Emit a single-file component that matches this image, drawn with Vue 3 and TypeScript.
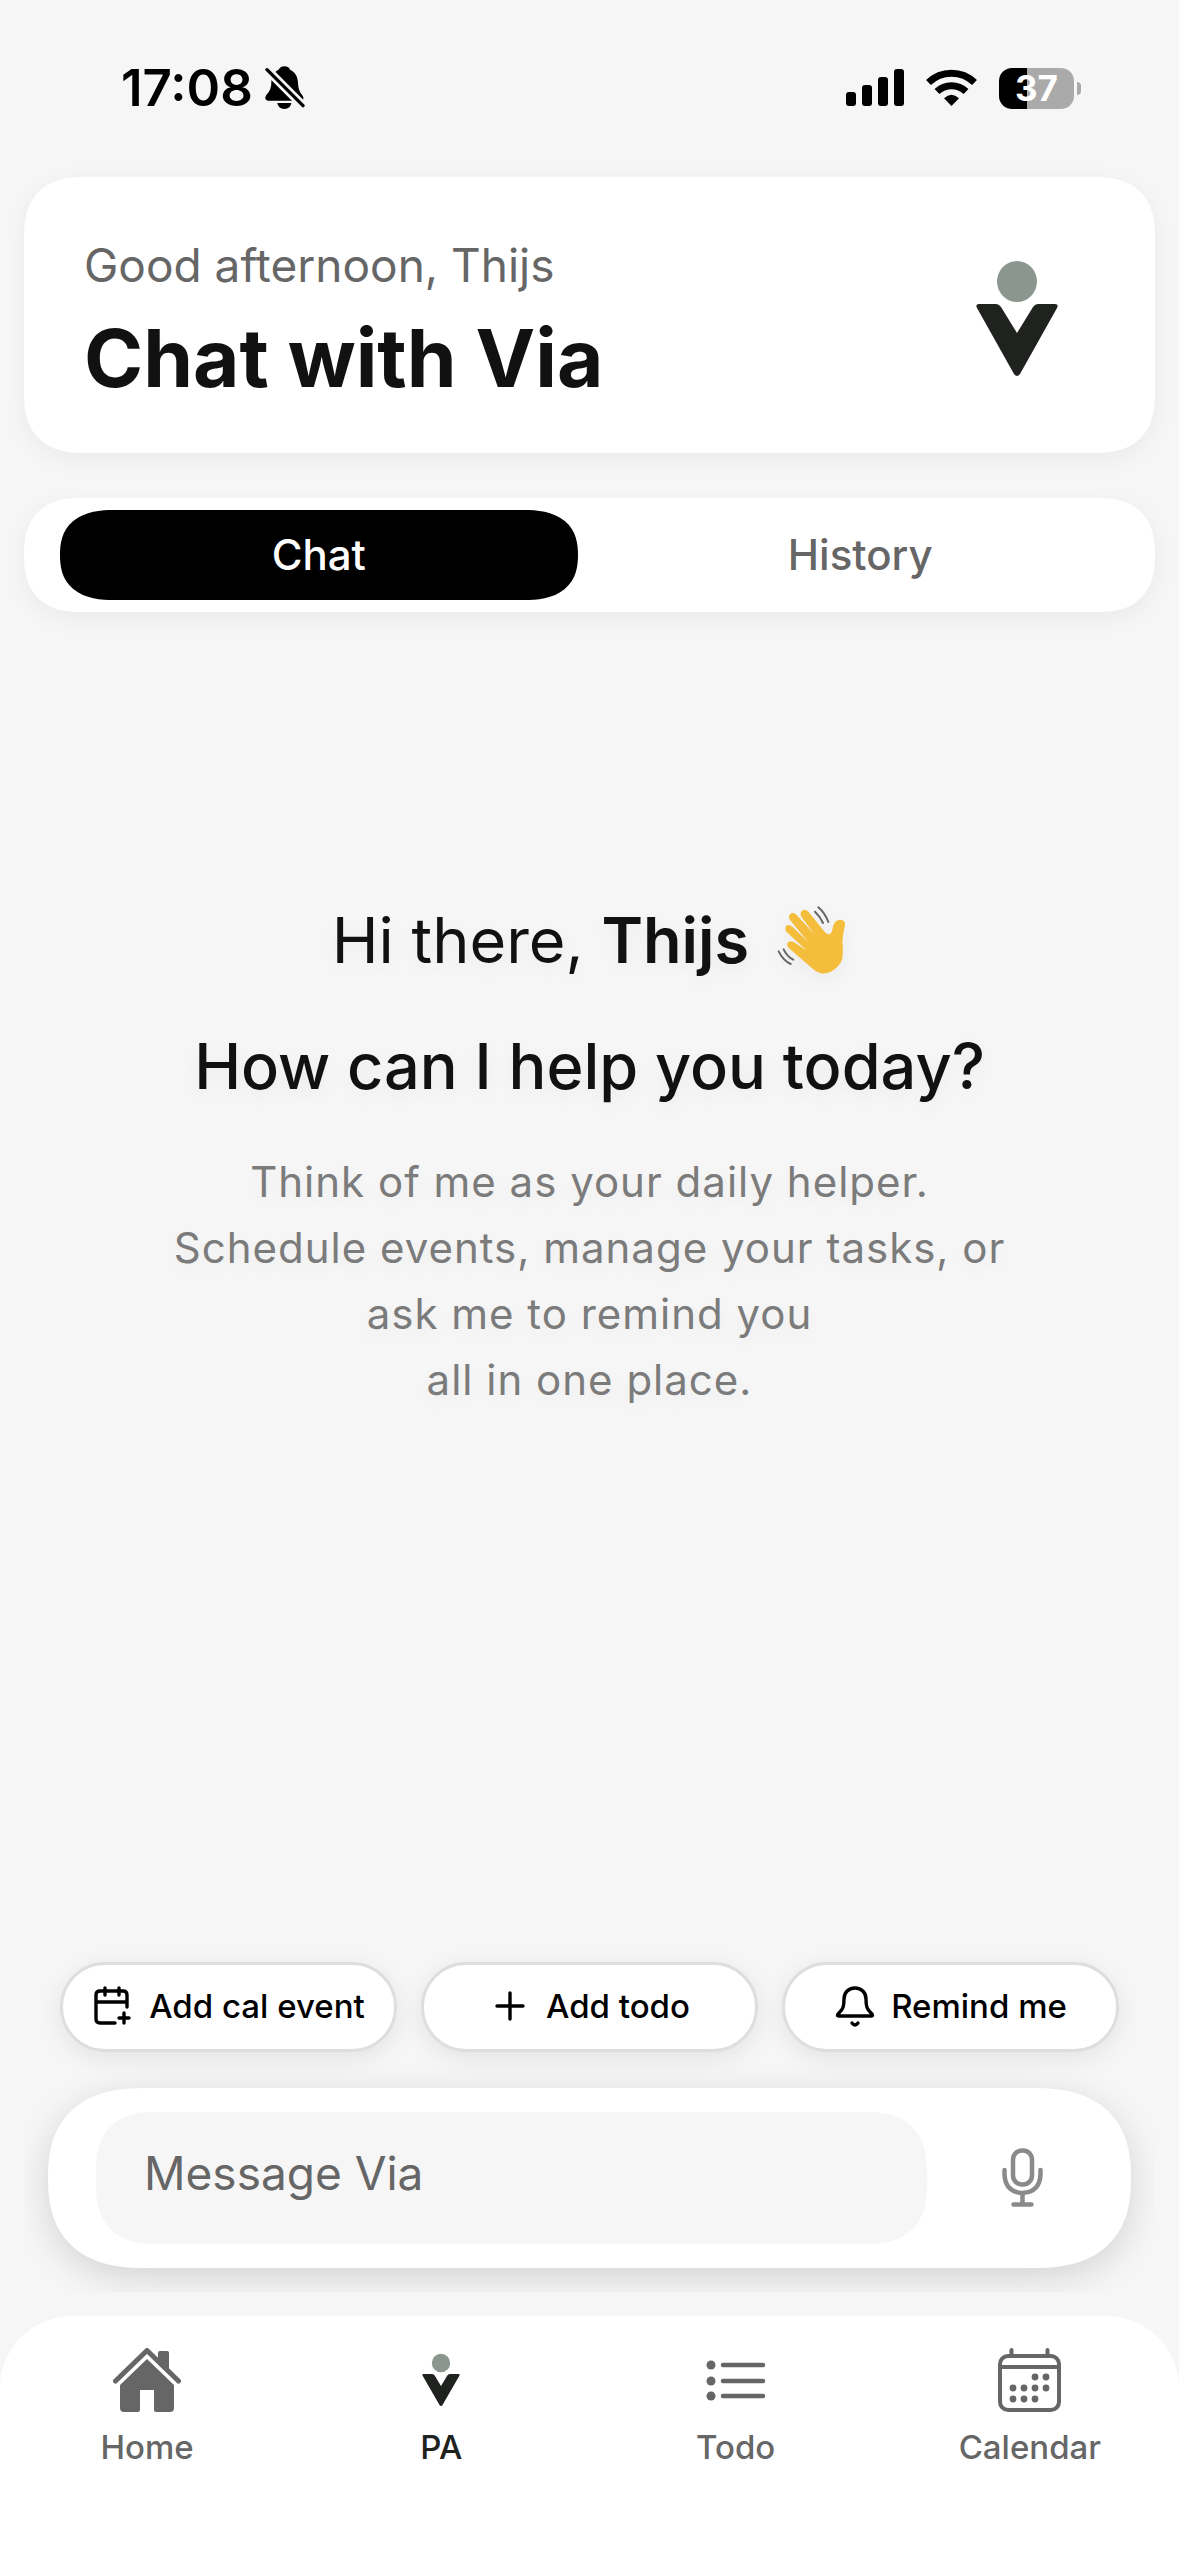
<script setup lang="ts">
import { ref } from 'vue'

type Tab = 'chat' | 'history'

const userName = 'Thijs'
const activeTab = ref<Tab>('chat')
const message = ref('')

const tabs: { id: Tab; label: string }[] = [
  { id: 'chat', label: 'Chat' },
  { id: 'history', label: 'History' },
]

const quickActions = [
  { id: 'event', label: 'Add cal event' },
  { id: 'todo', label: 'Add todo' },
  { id: 'remind', label: 'Remind me' },
]

const navItems = [
  { id: 'home', label: 'Home' },
  { id: 'pa', label: 'PA' },
  { id: 'todo', label: 'Todo' },
  { id: 'calendar', label: 'Calendar' },
]
const currentNav = 'pa'

const calendarDots: [number, number][] = [
  [37, 29], [48, 29],
  [15, 40], [26, 40], [37, 40], [48, 40],
  [15, 51], [26, 51], [37, 51],
]
</script>

<template>
  <div class="screen">
    <div class="status">
      <div class="status-left">
        <span class="time">17:08</span>
        <svg width="40" height="44" viewBox="77 50 120 132" role="img" aria-label="Silent mode">
          <path d="M135 51C145 51 150 56 152 61C168 68 175 82 176 100C177 118 181 128 188 136Q194 143 192 150Q191 154 184 154H86Q77 153 78 144Q80 137 88 128Q96 118 96 98C97 80 104 67 118 61C121 55 126 51 135 51Z" />
          <path d="M114 161H156Q154 178 135 179Q116 178 114 161Z" />
          <path d="M83 61L191 169" stroke="#f6f6f6" stroke-width="26" />
          <path d="M83 61L191 169" stroke="#000" stroke-width="10" stroke-linecap="round" />
        </svg>
      </div>
      <div class="status-right">
        <svg width="58" height="38" viewBox="0 0 58 38" role="img" aria-label="Signal strength">
          <rect x="0" y="23" width="10" height="14" rx="3" />
          <rect x="16" y="16" width="10" height="21" rx="3" />
          <rect x="32" y="8" width="10" height="29" rx="3" />
          <rect x="48" y="0" width="10" height="37" rx="3" />
        </svg>
        <svg width="51" height="38" viewBox="0 0 51 38" role="img" aria-label="Wi-Fi">
          <g fill="none" stroke="#000" stroke-width="7">
            <path d="M2.5 13.5A33 33 0 0 1 48.500 13.5" />
            <path d="M11 22.500A21 21 0 0 1 40 22.500" />
          </g>
          <path d="M25.500 37L18 29.300Q25.500 22 33 29.300Z" />
        </svg>
        <div class="battery">
          <div class="battery-body"><span>37</span></div>
          <div class="battery-tip"></div>
        </div>
      </div>
    </div>

    <header class="card hero">
      <div>
        <p class="hello">Good afternoon, {{ userName }}</p>
        <h1>Chat with Via</h1>
      </div>
      <svg class="logo" width="82" height="119" viewBox="0 0 82 119" role="img" aria-label="Via logo">
        <ellipse cx="41" cy="20.500" rx="20" ry="20.500" fill="#8b978e" />
        <path d="M3 43H20Q23 43 25 46L41 72L57 46Q59 43 62 43H79Q83 43 81 47L44 113Q41 117 38 113L1 47Q-1 43 3 43Z" fill="#20221f" />
      </svg>
    </header>

    <div class="card tabs" role="tablist">
      <button
        v-for="tab in tabs"
        :key="tab.id"
        type="button"
        role="tab"
        class="tab"
        :class="{ active: activeTab === tab.id }"
        :aria-selected="activeTab === tab.id"
        @click="activeTab = tab.id"
      >
        {{ tab.label }}
      </button>
    </div>

    <main class="intro">
      <p class="greeting">
        <span>Hi there, <strong>{{ userName }}</strong></span>
        <svg class="wave" width="70" height="70" viewBox="72 42 210 210" role="img" aria-label="Waving hand">
          <path d="M276 103Q278 88 263 87Q247 86 241 103L237 120Q233 131 225 130Q219 129 213 120L165 61Q155 52 146 60Q139 68 146 79L183 129L129 70Q119 62 111 70Q105 78 111 87L165 152L118 107Q107 97 99 106Q94 114 101 123L160 178L122 153Q110 147 104 155Q99 164 108 172L180 234Q205 256 234 242Q262 225 268 203Q271 175 268 150Q270 130 276 103Z" fill="#f5bd3c" />
          <g fill="none" stroke="#666" stroke-width="6" stroke-linecap="round">
            <path d="M196 49Q216 66 226 93" />
            <path d="M186 62Q202 77 210 96" />
            <path d="M77 181Q90 208 113 219" />
            <path d="M92 175Q102 197 121 206" />
          </g>
        </svg>
      </p>
      <h2>How can I help you today?</h2>
      <p class="blurb">
        Think of me as your daily helper.<br />
        Schedule events, manage your tasks, or<br />
        ask me to remind you<br />
        all in one place.
      </p>
    </main>

    <section class="dock">
      <div class="chips">
        <button v-for="action in quickActions" :key="action.id" type="button" class="chip">
          <svg width="42" height="42" viewBox="0 0 42 42" fill="none" stroke="#000" stroke-width="3.400" stroke-linecap="round" stroke-linejoin="round" aria-hidden="true">
            <template v-if="action.id === 'event'">
              <path d="M35 22V10Q35 6 31 6H8Q4 6 4 10V34Q4 38 8 38H23M4 17H35M13 3V10M27 3V10M32 28V38M27 33H37" />
            </template>
            <path v-else-if="action.id === 'todo'" d="M21 8V34M8 21H34" />
            <template v-else>
              <path d="M21 3C14 3 10 8 10 14C10 22 9 24 5 28Q2 31 5 31H37Q40 31 37 28C33 24 32 22 32 14C32 8 28 3 21 3Z" />
              <path d="M18 38Q21 42 24 38" />
            </template>
          </svg>
          <span>{{ action.label }}</span>
        </button>
      </div>
      <form class="composer" @submit.prevent>
        <input v-model="message" type="text" placeholder="Message Via" aria-label="Message Via" />
        <button type="button" class="mic" aria-label="Record voice message">
          <svg width="42" height="60" viewBox="0 0 42 60" fill="none" stroke="#8a8a8a" stroke-width="4.500" stroke-linecap="round" aria-hidden="true">
            <rect x="11" y="2.500" width="19" height="34" rx="9" />
            <path d="M2.500 22V26Q3 44 20.500 45Q38 44 38.500 26V22M20.500 45V56M11.500 56.500H29.500" />
          </svg>
        </button>
      </form>
    </section>

    <nav class="nav">
      <a v-for="item in navItems" :key="item.id" href="#" class="nav-item" :class="{ current: item.id === currentNav }">
        <svg v-if="item.id === 'home'" width="68" height="66" viewBox="0 0 68 66" aria-hidden="true">
          <path d="M45 13V5Q45 3 47 3H54Q56 3 56 5V23Z" fill="#666" />
          <path d="M2.500 33L34 2.500L65.500 33" fill="none" stroke="#666" stroke-width="5" stroke-linecap="round" stroke-linejoin="round" />
          <path d="M34 11L61 37V60Q61 64 57 64H43Q41 64 41 62V42H27V62Q27 64 25 64H11Q7 64 7 60V37Z" fill="#666" />
        </svg>
        <svg v-else-if="item.id === 'pa'" width="38" height="66" viewBox="0 0 38 66" aria-hidden="true">
          <circle cx="19" cy="15" r="9.200" fill="#8b978e" />
          <path d="M1 26H10Q12 26 13 28L19 38L25 28Q26 26 28 26H37Q38 26 37.500 27.500L20.500 57Q19 59 17.500 57L.5 27.500Q0 26 1 26Z" fill="#20221f" />
        </svg>
        <svg v-else-if="item.id === 'todo'" width="60" height="66" viewBox="0 0 60 66" aria-hidden="true">
          <g v-for="y in [17, 33, 48]" :key="y">
            <circle cx="5" :cy="y" r="4.500" fill="#666" />
            <path :d="`M17 ${y}H57`" stroke="#666" stroke-width="4.500" stroke-linecap="round" />
          </g>
        </svg>
        <svg v-else width="64" height="66" viewBox="0 0 64 66" aria-hidden="true">
          <path d="M2 19H61M13.500 2V7M49.500 2V7" stroke="#666" stroke-width="4" stroke-linecap="round" />
          <rect x="2" y="8" width="59" height="54" rx="8" fill="none" stroke="#666" stroke-width="4" />
          <circle v-for="([x, y], i) in calendarDots" :key="i" :cx="x" :cy="y" r="3.400" fill="#666" />
        </svg>
        <span>{{ item.label }}</span>
      </a>
    </nav>
  </div>
</template>

<style>
body {
  margin: 0;
  background: #f6f6f6;
}
</style>

<style scoped>
.screen {
  min-height: 100vh;
  display: flex;
  flex-direction: column;
  background: #f6f6f6;
  color: #111;
  font-family: Inter, "Liberation Sans", sans-serif;
}

p,
h1,
h2 {
  margin: 0;
}

svg {
  display: block;
  flex: none;
}

button {
  border: 0;
  padding: 0;
  background: none;
  font: inherit;
  color: inherit;
}

.status {
  display: flex;
  justify-content: space-between;
  padding: 58px 98px 59px 121px;
  color: #000;
}

.status-left,
.status-right {
  display: flex;
  align-items: center;
  height: 60px;
}

.status-left {
  gap: 12px;
}

.status-right {
  gap: 22px;
}

.time {
  font-size: 51px;
  font-weight: 600;
  line-height: 60px;
}

.battery {
  display: flex;
  align-items: center;
  gap: 3px;
}

.battery-body {
  width: 75px;
  height: 41px;
  border-radius: 13px;
  background: linear-gradient(90deg, #000 37%, #aaa 37%);
  color: #fff;
  font-size: 35px;
  font-weight: 700;
  line-height: 41px;
  text-align: center;
}

.battery-tip {
  width: 4px;
  height: 13px;
  border-radius: 0 6px 6px 0;
  background: #aaa;
}

.card {
  margin: 0 24px;
  background: #fff;
  border-radius: 48px;
  box-shadow: 0 6px 24px rgba(0, 0, 0, 0.05);
}

.hero {
  display: flex;
  align-items: center;
  justify-content: space-between;
  padding: 58px 97px 47px 60px;
}

.hello {
  color: #666;
  font-size: 46px;
  line-height: 60px;
}

h1 {
  margin-top: 15px;
  font-size: 80px;
  font-weight: 700;
  line-height: 96px;
}

.tabs {
  display: flex;
  gap: 24px;
  margin-top: 45px;
  padding: 12px 36px;
}

.tab {
  flex: 1;
  height: 90px;
  padding-bottom: 2px;
  border-radius: 45px;
  color: #666;
  font-size: 42px;
  font-weight: 500;
}

.tab.active {
  background: #000;
  color: #fff;
}

.intro {
  flex: 1;
  display: flex;
  flex-direction: column;
  align-items: center;
  padding: 288px 24px 48px;
  text-align: center;
  text-shadow: 0 6px 18px rgba(0, 0, 0, 0.05);
}

.greeting {
  display: flex;
  align-items: center;
  gap: 28px;
  font-size: 63px;
  line-height: 80px;
}

.greeting strong {
  font-weight: 600;
}

.wave {
  filter: drop-shadow(0 6px 9px rgba(0, 0, 0, 0.04));
}

h2 {
  margin-top: 46px;
  font-size: 63px;
  font-weight: 500;
  line-height: 80px;
}

.blurb {
  margin-top: 43px;
  color: #7b7b7b;
  font-size: 42px;
  line-height: 66px;
  letter-spacing: 1px;
}

.dock {
  margin: 0 24px 24px;
  padding: 24px;
  overflow: hidden;
}

.chips {
  display: flex;
  gap: 24px;
  padding: 0 12px;
}

.chip {
  flex: 1 1 0;
  display: flex;
  align-items: center;
  justify-content: center;
  gap: 15px;
  height: 90px;
  box-sizing: border-box;
  padding-bottom: 2px;
  border: 3px solid #dedede;
  border-radius: 45px;
  background: #fff;
  box-shadow: 0 6px 24px rgba(0, 0, 0, 0.08);
  color: #000;
  font-size: 33px;
  font-weight: 500;
  white-space: nowrap;
}

.composer {
  display: flex;
  align-items: center;
  gap: 36px;
  margin-top: 36px;
  padding: 24px 48px;
  border-radius: 84px;
  background: #fff;
  box-shadow: 0 9px 36px rgba(0, 0, 0, 0.14);
}

.composer input {
  flex: 1;
  min-width: 0;
  height: 132px;
  box-sizing: border-box;
  padding: 0 48px 10px;
  border: 0;
  border-radius: 48px;
  background: #f6f6f6;
  color: #111;
  font: inherit;
  font-size: 46px;
}

.composer input::placeholder {
  color: #666;
  opacity: 1;
}

.mic {
  display: grid;
  place-items: center;
  width: 120px;
  height: 120px;
}

.nav {
  display: flex;
  height: 240px;
  box-sizing: border-box;
  padding: 32px 2px 0 0;
  border-radius: 72px 72px 0 0;
  background: #fff;
}

.nav-item {
  flex: 1;
  display: flex;
  flex-direction: column;
  align-items: center;
  gap: 12px;
  color: #666;
  font-size: 33px;
  font-weight: 500;
  line-height: 42px;
  text-decoration: none;
}

.nav-item.current {
  color: #20221f;
}

@supports (corner-shape: superellipse(1.3)) {
  .card,
  .composer,
  .composer input,
  .tab {
    corner-shape: superellipse(1.3);
  }

  .card,
  .composer input {
    border-radius: 60px;
  }

  .tab {
    border-radius: 54px / 45px;
  }

  .composer {
    border-radius: 98px / 90px;
  }
}
</style>
